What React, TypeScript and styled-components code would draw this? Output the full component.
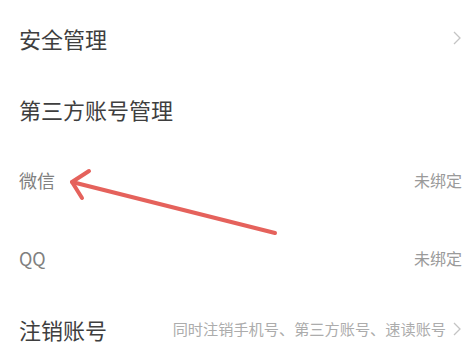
import React from "react";
import styled, { createGlobalStyle } from "styled-components";

const GlobalStyle = createGlobalStyle`
  html, body {
    margin: 0;
    padding: 0;
    background: #ffffff;
  }
  body {
    font-family: "Noto Sans CJK SC", "Noto Sans", sans-serif;
  }
`;

const Page = styled.div`
  position: relative;
  width: 469px;
  height: 357px;
  overflow: hidden;
  background: #ffffff;
`;

const Row = styled.div<{ $h: number }>`
  display: flex;
  align-items: center;
  justify-content: space-between;
  height: ${(p) => p.$h}px;
  padding: 0 7px 0 19px;
`;

const Title = styled.div`
  font-size: 22px;
  line-height: 1;
  color: #3e3e3e;
`;

const Item = styled.div`
  font-size: 18px;
  line-height: 1;
  color: #808080;
`;

const Value = styled.div`
  display: flex;
  align-items: center;
  gap: 6px;
  font-size: 16px;
  line-height: 1;
  color: #9a9a9a;
`;

const Desc = styled(Value)`
  font-size: 15.2px;
  color: #acacac;
`;

const Overlay = styled.svg`
  position: absolute;
  left: 0;
  top: 0;
  pointer-events: none;
`;

const Chevron = () => (
  <svg width="10" height="16" viewBox="0 0 10 16">
    <polyline
      points="2,2 8,8 2,14"
      fill="none"
      stroke="#c4c4c4"
      strokeWidth="1.3"
    />
  </svg>
);

export default function App() {
  return (
    <>
      <GlobalStyle />
      <Page>
        <Row $h={75}>
          <Title>安全管理</Title>
          <Chevron />
        </Row>
        <Row $h={67}>
          <Title>第三方账号管理</Title>
        </Row>
        <Row $h={76}>
          <Item>微信</Item>
          <Value>未绑定</Value>
        </Row>
        <Row $h={80}>
          <Item>QQ</Item>
          <Value>未绑定</Value>
        </Row>
        <Row $h={62}>
          <Title>注销账号</Title>
          <Desc>
            同时注销手机号、第三方账号、速读账号
            <Chevron />
          </Desc>
        </Row>
        <Overlay width="469" height="357" viewBox="0 0 469 357">
          <g
            fill="none"
            stroke="#e5625c"
            strokeWidth="4"
            strokeLinecap="round"
            strokeLinejoin="round"
          >
            <path d="M275 233 L72 182" />
            <path d="M89 171 L72 182 L82 198" />
          </g>
        </Overlay>
      </Page>
    </>
  );
}
